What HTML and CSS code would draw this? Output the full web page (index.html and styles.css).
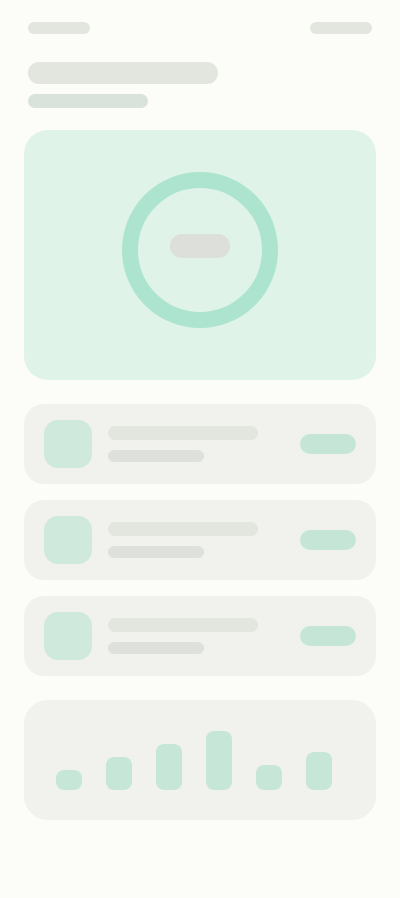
FILE: index.html
```html
<!DOCTYPE html>
<html lang="en">
<head>
<meta charset="utf-8">
<title>Loading</title>
<link rel="stylesheet" href="styles.css">
</head>
<body>
<div class="page">
  <div class="topbar">
    <div class="sk sk-top"></div>
    <div class="sk sk-top"></div>
  </div>
  <div class="heading">
    <div class="sk sk-title"></div>
    <div class="sk sk-sub"></div>
  </div>
  <div class="hero">
    <div class="ring">
      <div class="sk sk-pill"></div>
    </div>
  </div>
  <div class="list">
    <div class="item">
      <div class="avatar"></div>
      <div class="lines">
        <div class="sk sk-l1"></div>
        <div class="sk sk-l2"></div>
      </div>
      <div class="btn"></div>
    </div>
    <div class="item">
      <div class="avatar"></div>
      <div class="lines">
        <div class="sk sk-l1"></div>
        <div class="sk sk-l2"></div>
      </div>
      <div class="btn"></div>
    </div>
    <div class="item">
      <div class="avatar"></div>
      <div class="lines">
        <div class="sk sk-l1"></div>
        <div class="sk sk-l2"></div>
      </div>
      <div class="btn"></div>
    </div>
  </div>
  <div class="chart">
    <div class="bar" style="height:20px"></div>
    <div class="bar" style="height:33px"></div>
    <div class="bar" style="height:46px"></div>
    <div class="bar" style="height:59px"></div>
    <div class="bar" style="height:25px"></div>
    <div class="bar" style="height:38px"></div>
  </div>
</div>
</body>
</html>
```
FILE: styles.css
```css
* { box-sizing: border-box; }
html, body {
  margin: 0;
  padding: 0;
  background: #fcfcf8;
  font-family: "Liberation Sans", Arial, sans-serif;
}
.page {
  width: 400px;
  padding: 22px 24px;
}
.sk {
  background: #e3e5df;
}
.topbar {
  display: flex;
  justify-content: space-between;
  padding: 0 4px;
}
.sk-top {
  width: 62px;
  height: 12px;
  border-radius: 6px;
}
.heading {
  padding: 0 4px;
  margin-top: 28px;
  display: flex;
  flex-direction: column;
  gap: 10px;
}
.sk-title {
  width: 190px;
  height: 22px;
  border-radius: 11px;
}
.sk-sub {
  width: 120px;
  height: 14px;
  border-radius: 7px;
  background: #d9e2db;
}
.hero {
  margin-top: 22px;
  height: 250px;
  border-radius: 24px;
  background: #dff3e9;
  display: flex;
  align-items: flex-start;
  justify-content: center;
  padding-top: 42px;
}
.ring {
  width: 156px;
  height: 156px;
  border-radius: 50%;
  border: 16px solid #ace4cf;
  display: flex;
  align-items: center;
  justify-content: center;
}
.sk-pill {
  width: 60px;
  height: 24px;
  border-radius: 12px;
  background: #dddfda;
  margin-bottom: 8px;
}
.list {
  margin-top: 24px;
  display: flex;
  flex-direction: column;
  gap: 16px;
}
.item {
  height: 80px;
  border-radius: 20px;
  background: #f1f2ed;
  display: flex;
  align-items: center;
  padding: 0 20px;
  gap: 16px;
}
.avatar {
  width: 48px;
  height: 48px;
  border-radius: 14px;
  background: #cfeadc;
  flex: none;
}
.lines {
  flex: 1;
  display: flex;
  flex-direction: column;
  gap: 10px;
}
.sk-l1 {
  width: 150px;
  height: 14px;
  border-radius: 7px;
}
.sk-l2 {
  width: 96px;
  height: 12px;
  border-radius: 6px;
  background: #dee1db;
}
.btn {
  width: 56px;
  height: 20px;
  border-radius: 10px;
  background: #c5e6d6;
  flex: none;
}
.chart {
  margin-top: 24px;
  height: 120px;
  border-radius: 24px;
  background: #f1f2ed;
  display: flex;
  align-items: flex-end;
  gap: 24px;
  padding: 0 32px 30px;
}
.bar {
  width: 26px;
  border-radius: 8px;
  background: #c6e6d7;
}
```
